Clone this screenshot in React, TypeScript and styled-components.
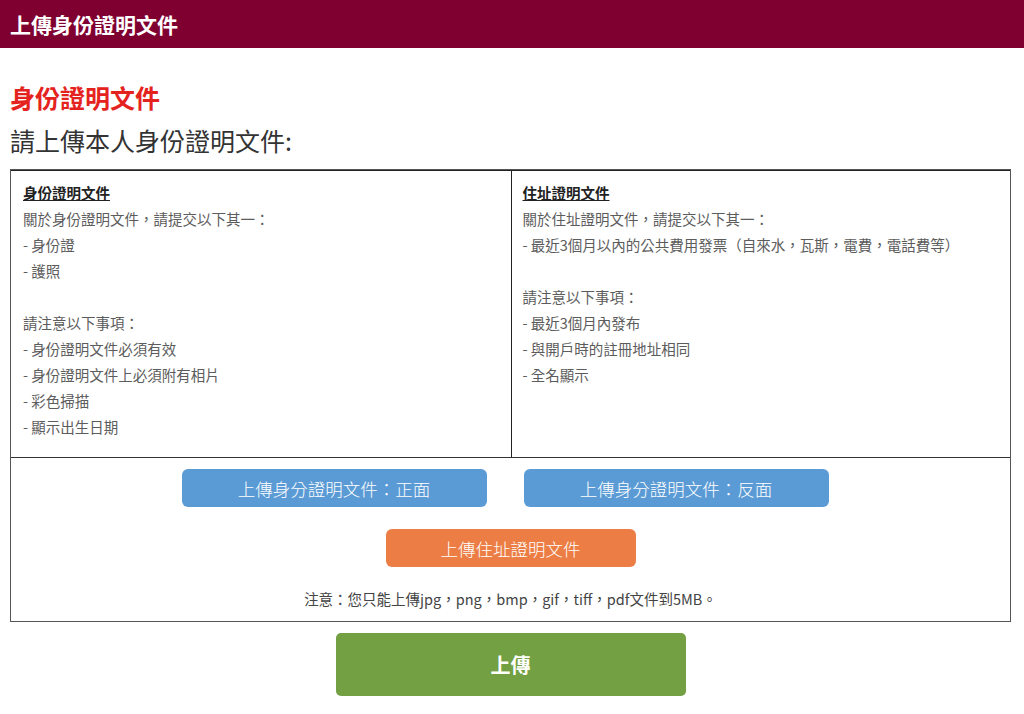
import { FC } from 'react';
import styled, { createGlobalStyle } from 'styled-components';

const GlobalStyle = createGlobalStyle`
  body {
    margin: 0;
    background: #fff;
    font-family: "Noto Sans CJK TC", "Noto Sans", "Liberation Sans", sans-serif;
    color: #333;
    text-spacing-trim: space-all;
  }
`;

type Doc = {
  title: string;
  intro: string;
  options: string[];
  notes: string[];
};

const docs: Doc[] = [
  {
    title: '身份證明文件',
    intro: '關於身份證明文件，請提交以下其一：',
    options: ['身份證', '護照'],
    notes: ['身份證明文件必須有效', '身份證明文件上必須附有相片', '彩色掃描', '顯示出生日期'],
  },
  {
    title: '住址證明文件',
    intro: '關於住址證明文件，請提交以下其一：',
    options: ['最近3個月以內的公共費用發票（自來水，瓦斯，電費，電話費等）'],
    notes: ['最近3個月內發布', '與開戶時的註冊地址相同', '全名顯示'],
  },
];

const App: FC = () => {
  return (
    <>
      <GlobalStyle />
      <Header>上傳身份證明文件</Header>
      <Page>
        <SectionTitle>身份證明文件</SectionTitle>
        <Subtitle>請上傳本人身份證明文件:</Subtitle>
        <UploadBox>
          <DocGrid>
            {docs.map((doc, idx) => (
              <DocCell key={idx}>
                <CellTitle>{doc.title}</CellTitle>
                <Line>{doc.intro}</Line>
                {doc.options.map((item, i) => (
                  <Line key={i}>- {item}</Line>
                ))}
                <Line>&nbsp;</Line>
                <Line>請注意以下事項：</Line>
                {doc.notes.map((item, i) => (
                  <Line key={i}>- {item}</Line>
                ))}
              </DocCell>
            ))}
          </DocGrid>
          <ButtonArea>
            <ButtonRow $shift={11}>
              <UploadButton $color="#5b9bd5" $width={305}>
                上傳身分證明文件：正面
              </UploadButton>
              <UploadButton $color="#5b9bd5" $width={305}>
                上傳身分證明文件：反面
              </UploadButton>
            </ButtonRow>
            <ButtonRow>
              <UploadButton $color="#ec7e45" $width={250}>
                上傳住址證明文件
              </UploadButton>
            </ButtonRow>
            <Note>注意：您只能上傳jpg，png，bmp，gif，tiff，pdf文件到5MB。</Note>
          </ButtonArea>
        </UploadBox>
        <SubmitRow>
          <SubmitButton>上傳</SubmitButton>
        </SubmitRow>
      </Page>
    </>
  );
};

export default App;

const Header = styled.div`
  height: 48px;
  display: flex;
  align-items: center;
  padding: 0 10px;
  background-color: #7f0030;
  color: #fff;
  font-size: 21px;
  font-weight: 700;
`;

const Page = styled.div`
  padding: 0 13px 0 10px;
`;

const SectionTitle = styled.h2`
  margin: 33px 0 0;
  font-size: 25px;
  line-height: 32px;
  font-weight: 700;
  color: #e5231e;
`;

const Subtitle = styled.p`
  margin: 10px 0 0;
  font-size: 25px;
  line-height: 34px;
  font-weight: 400;
  color: #333;
`;

const UploadBox = styled.div`
  margin-top: 12px;
  border: 1px solid #555;
`;

const DocGrid = styled.div`
  display: grid;
  grid-template-columns: 1fr 1fr;
  height: 286px;
  border-top: 1px solid #222;
  border-bottom: 1px solid #333;
`;

const DocCell = styled.div`
  padding: 9px 12px 9px 11px;
  border-left: 1px solid #222;

  &:first-child {
    border-left: none;
    padding-left: 12px;
  }
`;

const CellTitle = styled.p`
  margin: 0;
  font-size: 14.5px;
  line-height: 26px;
  font-weight: 700;
  color: #222;
  text-decoration: underline;
`;

const Line = styled.p`
  margin: 0;
  font-size: 14.5px;
  line-height: 26px;
  color: #5c5c5c;
  white-space: pre;
`;

const ButtonArea = styled.div`
  display: flex;
  flex-direction: column;
  align-items: center;
  padding-top: 11px;
`;

const ButtonRow = styled.div<{ $shift?: number }>`
  display: flex;
  justify-content: center;
  gap: 37px;
  margin-bottom: 22px;
  margin-right: ${(p) => p.$shift ?? 0}px;
`;

const UploadButton = styled.button<{ $color: string; $width: number }>`
  width: ${(p) => p.$width}px;
  height: 38px;
  border: none;
  border-radius: 6px;
  background-color: ${(p) => p.$color};
  color: #fff;
  font-family: inherit;
  font-size: 17.5px;
  font-weight: 300;
  cursor: pointer;
`;

const Note = styled.p`
  margin: 0;
  padding: 0 0 12px;
  font-size: 14.5px;
  line-height: 20px;
  color: #444;
`;

const SubmitRow = styled.div`
  display: flex;
  justify-content: center;
  padding: 11px 0 0;
`;

const SubmitButton = styled.button`
  width: 350px;
  height: 63px;
  border: none;
  border-radius: 5px;
  background-color: #72a043;
  color: #fff;
  font-family: inherit;
  font-size: 20px;
  font-weight: 700;
  cursor: pointer;
`;
